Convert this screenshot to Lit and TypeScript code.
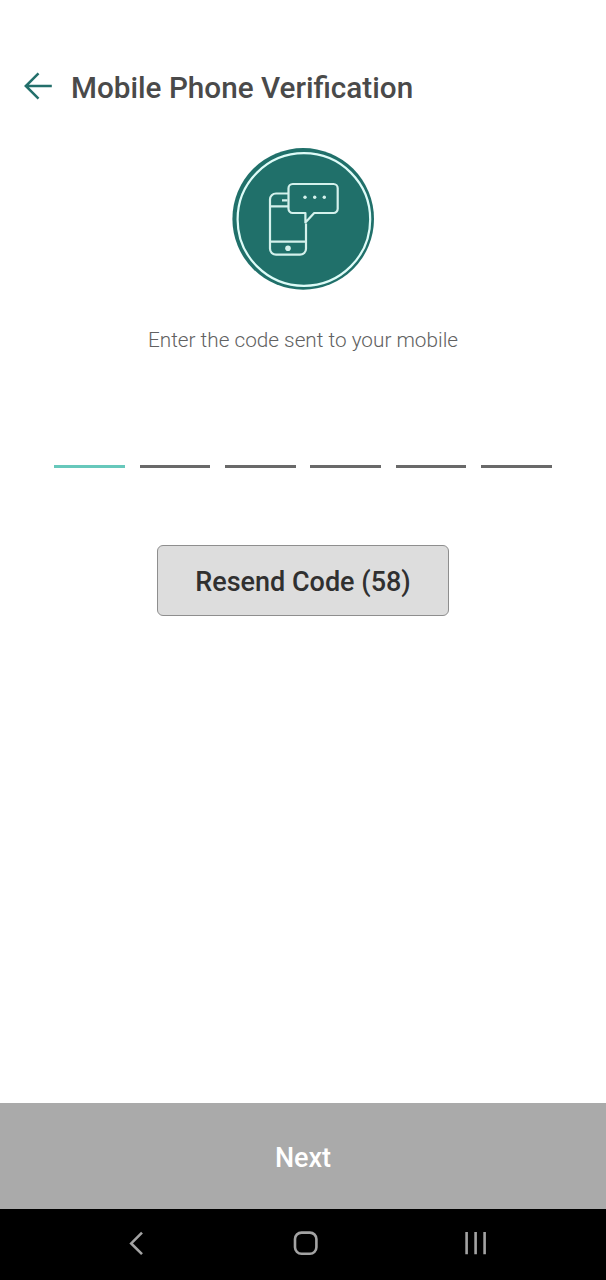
import { LitElement, html, css } from "lit";
import { customElement, property, state } from "lit/decorators.js";
import { classMap } from "lit/directives/class-map.js";

@customElement("verification-badge")
class VerificationBadge extends LitElement {
  static styles = css`
    :host { display: block; width: 142px; height: 142px; }
    svg { display: block; }
  `;
  render() {
    return html`
      <svg width="142" height="142" viewBox="232 148 142 142" fill="none" stroke="#d4f1ec" stroke-width="2.2">
        <circle cx="303.2" cy="218.9" r="70.8" fill="#20706a" stroke="none" />
        <circle cx="303.9" cy="219.5" r="66.3" stroke="#defcf8" stroke-width="2.2" />
        <path d="M288.5 193.5H276a6 6 0 0 0-6 6V248.7a6 6 0 0 0 6 6H300a6 6 0 0 0 6-6V223.5" />
        <path d="M270 206.4H288.5M270 241.6H306M282 200.3H287.5" />
        <path stroke-linejoin="round" d="M292.7 184H333.5a4.2 4.2 0 0 1 4.2 4.2V208.8a4.2 4.2 0 0 1-4.2 4.2H314.2L305.4 222.4V213H292.7a4.2 4.2 0 0 1-4.2-4.2V188.2a4.2 4.2 0 0 1 4.2-4.2Z" />
        <g fill="#d4f1ec" stroke="none">
          <circle cx="305" cy="197.3" r="1.7" />
          <circle cx="314.7" cy="197.3" r="1.7" />
          <circle cx="324.3" cy="197.3" r="1.7" />
          <circle cx="288" cy="248.2" r="2.8" />
        </g>
      </svg>
    `;
  }
}

@customElement("code-input")
class CodeInput extends LitElement {
  @property({ type: Number }) length = 6;
  @property({ type: Number }) active = 0;
  static styles = css`
    :host { display: grid; grid-template-columns: repeat(6, 1fr); column-gap: 14.6px; height: 60px; }
    .slot { border-bottom: 3px solid #696969; }
    .active { border-color: #67c8bb; }
  `;
  render() {
    return Array.from({ length: this.length }, (_, i) =>
      html`<div class=${classMap({ slot: true, active: i === this.active })}></div>`
    );
  }
}

@customElement("system-nav")
class SystemNav extends LitElement {
  static styles = css`
    :host { display: block; height: 71px; background: #000; }
    svg { display: block; }
  `;
  render() {
    return html`
      <svg width="606" height="71" viewBox="0 0 606 71" fill="none" stroke="#a3a3a3" stroke-width="2.6">
        <path d="M142 23.7 131.2 34.4 142 45.1" />
        <rect x="295" y="23.6" width="21.4" height="21.2" rx="6.5" />
        <path d="M466.6 23V45.3M475.6 23V45.3M484.6 23V45.3" />
      </svg>
    `;
  }
}

@customElement("app-root")
class AppRoot extends LitElement {
  @state() private seconds = 58;
  static styles = css`
    :host {
      display: flex; flex-direction: column; width: 606px; height: 1280px;
      background: #fff; font-family: Roboto, sans-serif; overflow: hidden;
    }
    header { display: flex; align-items: center; height: 60px; padding: 57px 0 0 24px; gap: 18px; }
    header svg { display: block; flex: none; margin-top: -2px; }
    h1 { margin: 1px 0 0; font-size: 29.7px; line-height: 40px; font-weight: 500; color: #4a4a4a; white-space: nowrap; }
    main { flex: 1; display: flex; flex-direction: column; align-items: center; padding-top: 31px; }
    p { margin: 36px 0 0; font-size: 20.75px; line-height: 28px; font-weight: 300; color: #616161; white-space: nowrap; }
    code-input { width: 497.6px; margin-top: 54px; }
    .resend {
      box-sizing: border-box; width: 292px; height: 71px; margin-top: 77px; padding: 3px 0 0;
      border: 1px solid #8e8e8e; border-radius: 6px; background: #dddddd; color: #303030;
      font: 500 27px/36px Roboto, sans-serif; white-space: nowrap;
    }
    .next {
      height: 106px; padding: 3px 0 0; border: 0; background: #aaaaaa; color: #fff;
      font: 500 27px/36px Roboto, sans-serif;
    }
  `;
  render() {
    return html`
      <header>
        <svg width="29" height="28" viewBox="0 0 29 28" fill="none" stroke="#236f6b" stroke-width="2.5">
          <path d="M27.8 14H2M14.5 1.3 1.8 14 14.5 26.7" />
        </svg>
        <h1>Mobile Phone Verification</h1>
      </header>
      <main>
        <verification-badge></verification-badge>
        <p>Enter the code sent to your mobile</p>
        <code-input .length=${6} .active=${0}></code-input>
        <button class="resend">Resend Code (${this.seconds})</button>
      </main>
      <button class="next">Next</button>
      <system-nav></system-nav>
    `;
  }
}
